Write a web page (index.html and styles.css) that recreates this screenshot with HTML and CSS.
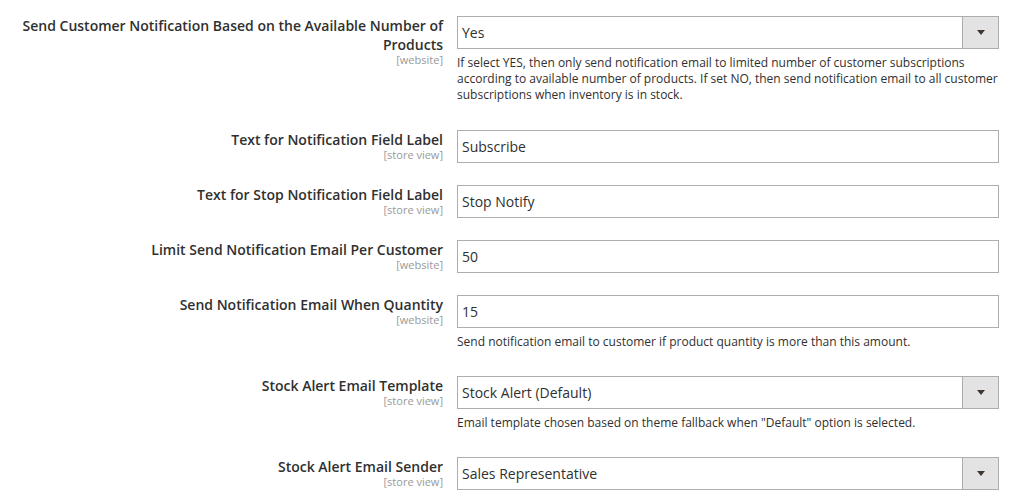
FILE: index.html
```html
<!DOCTYPE html>
<html lang="en">
<head>
<meta charset="utf-8">
<title>Stock Alert Configuration</title>
<link rel="stylesheet" href="styles.css">
</head>
<body>
<div class="form">
  <div class="row">
    <div class="label"><span class="name">Send Customer Notification Based on the Available Number of Products</span><span class="scope">[website]</span></div>
    <div class="control">
      <div class="select"><span class="value">Yes</span><span class="arrow"></span></div>
      <div class="note note-long">If select YES, then only send notification email to limited number of customer subscriptions according to available number of products. If set NO, then send notification email to all customer subscriptions when inventory is in stock.</div>
    </div>
  </div>
  <div class="row">
    <div class="label"><span class="name">Text for Notification Field Label</span><span class="scope">[store view]</span></div>
    <div class="control"><div class="input">Subscribe</div></div>
  </div>
  <div class="row">
    <div class="label"><span class="name">Text for Stop Notification Field Label</span><span class="scope">[store view]</span></div>
    <div class="control"><div class="input">Stop Notify</div></div>
  </div>
  <div class="row">
    <div class="label"><span class="name">Limit Send Notification Email Per Customer</span><span class="scope">[website]</span></div>
    <div class="control"><div class="input">50</div></div>
  </div>
  <div class="row">
    <div class="label"><span class="name">Send Notification Email When Quantity</span><span class="scope">[website]</span></div>
    <div class="control">
      <div class="input">15</div>
      <div class="note">Send notification email to customer if product quantity is more than this amount.</div>
    </div>
  </div>
  <div class="row">
    <div class="label"><span class="name">Stock Alert Email Template</span><span class="scope">[store view]</span></div>
    <div class="control">
      <div class="select"><span class="value">Stock Alert (Default)</span><span class="arrow"></span></div>
      <div class="note">Email template chosen based on theme fallback when "Default" option is selected.</div>
    </div>
  </div>
  <div class="row">
    <div class="label"><span class="name">Stock Alert Email Sender</span><span class="scope">[store view]</span></div>
    <div class="control">
      <div class="select"><span class="value">Sales Representative</span><span class="arrow"></span></div>
    </div>
  </div>
</div>
</body>
</html>
```

FILE: styles.css
```css
html, body {
  margin: 0;
  padding: 0;
  background: #ffffff;
}
body {
  font-family: "Open Sans", "Liberation Sans", sans-serif;
  color: #303030;
  width: 1018px;
  height: 502px;
  overflow: hidden;
}
.form {
  display: flex;
  flex-direction: column;
  gap: 22px;
  padding-top: 16px;
}
.row {
  display: grid;
  grid-template-columns: 443px 542px;
  column-gap: 14px;
}
.label {
  display: flex;
  flex-direction: column;
  align-items: flex-end;
  text-align: right;
  padding-left: 16px;
}
.name {
  font-size: 14px;
  font-weight: 600;
  line-height: 19px;
}
.scope {
  font-size: 11px;
  line-height: 11px;
  color: #999999;
}
.control {
  display: flex;
  flex-direction: column;
}
.input, .select {
  box-sizing: border-box;
  height: 33px;
  border: 1px solid #adadad;
  background: #ffffff;
  font-size: 14px;
  line-height: 31px;
  padding: 0 4px;
  white-space: nowrap;
}
.select {
  display: flex;
  justify-content: space-between;
  padding-right: 0;
}
.arrow {
  width: 35px;
  border-left: 1px solid #adadad;
  background: #e3e3e3;
  display: flex;
  align-items: center;
  justify-content: center;
}
.arrow::before {
  content: "";
  width: 0;
  height: 0;
  border-left: 4px solid transparent;
  border-right: 4px solid transparent;
  border-top: 5px solid #41362f;
}
.note {
  font-size: 12px;
  line-height: 16px;
  margin-top: 6px;
  margin-bottom: 4px;
}
.note-long {
  margin-bottom: 5px;
}
```
